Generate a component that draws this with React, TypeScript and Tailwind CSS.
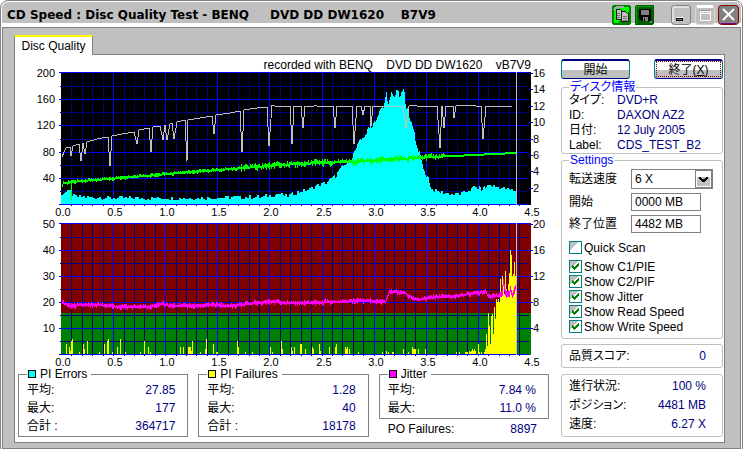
import type { ReactNode } from "react";

type Point = [number, number];

const PLOT_LEFT = 46;
const PLOT_WIDTH = 470;
const STEP = 52.1;

const writeSpeed: Point[] = [
  [1, 85], [3, 80], [5, 76], [9, 75], [10, 84], [12, 74], [18, 72], [20, 89], [22, 71], [24, 82], [26, 70],
  [36, 67], [47, 65], [49, 94], [51, 64], [61, 62], [73, 60], [76, 72], [78, 58], [88, 56], [90, 80], [92, 55],
  [99, 54], [102, 68], [104, 53], [106, 68], [109, 52], [111, 51], [113, 67], [116, 50], [124, 48], [126, 89],
  [127, 48], [139, 46], [151, 44], [153, 62], [155, 43], [169, 41], [179, 39], [181, 80], [183, 38], [196, 36],
  [206, 35], [208, 74], [211, 33], [214, 34], [229, 34], [231, 72], [233, 34], [240, 34], [242, 56], [244, 34],
  [253, 34], [254, 33], [256, 34], [272, 34], [274, 56], [276, 34], [291, 34], [293, 72], [296, 34], [300, 34],
  [302, 43], [304, 34], [309, 34], [310, 54], [312, 34], [342, 34], [345, 56], [348, 34], [354, 33], [356, 34],
  [376, 34], [379, 76], [381, 34], [383, 56], [385, 34], [392, 34], [393, 46], [395, 34], [413, 33], [415, 34],
  [420, 34], [422, 67], [425, 34], [451, 34],
];

const readSpeed: Point[] = [
  [1, 113], [2, 110], [20, 108], [60, 105], [118, 100], [170, 96], [218, 92], [260, 90], [311, 88], [371, 84], [454, 80],
];

const piErrors: Point[] = [
  [0, 10], [5, 12], [9, 13], [12, 8], [20, 7], [60, 6], [130, 6], [200, 7], [211, 9], [218, 10], [226, 8],
  [237, 12], [249, 15], [254, 18], [264, 21], [272, 26], [280, 35], [287, 42], [292, 50], [298, 61], [304, 70],
  [308, 76], [314, 84], [318, 91], [322, 96], [325, 110], [328, 102], [330, 108], [333, 104], [335, 114], [338, 110],
  [341, 114], [343, 107], [346, 91], [350, 81], [354, 66], [358, 51], [362, 35], [367, 26], [370, 15], [375, 13],
  [390, 10], [400, 10], [408, 14], [413, 17], [420, 15], [428, 19], [440, 16], [450, 14], [455, 13],
];

const jitter: Point[] = [
  [1, 79], [4, 80], [10, 82], [20, 81], [36, 81], [60, 83], [88, 83], [100, 80], [109, 82], [139, 82], [150, 81],
  [172, 82], [195, 79], [208, 78], [229, 79], [250, 79], [300, 77], [324, 78], [328, 68], [344, 69], [348, 73],
  [357, 76], [374, 73], [391, 73], [407, 70], [424, 68], [428, 73], [440, 71], [442, 61], [445, 73], [449, 67],
  [451, 71], [454, 64],
];

const piFailures: Point[] = [
  [5, 10], [8, 7], [9, 3], [10, 13], [11, 15], [18, 2], [22, 10], [23, 5], [26, 13], [38, 2], [43, 10], [46, 13],
  [47, 15], [51, 2], [56, 7], [59, 15], [64, 2], [79, 2], [83, 13], [87, 7], [89, 2], [119, 7], [122, 7], [127, 7],
  [128, 7], [129, 7], [130, 3], [131, 13], [139, 2], [144, 5], [145, 15], [152, 10], [155, 2], [156, 2], [176, 13],
  [177, 7], [184, 2], [191, 2], [209, 7], [211, 2], [220, 13], [221, 5], [230, 7], [231, 3], [233, 7], [239, 10],
  [240, 10], [244, 5], [251, 7], [252, 5], [258, 10], [259, 3], [268, 7], [274, 7], [275, 10], [284, 7], [285, 5],
  [286, 7], [288, 5], [297, 2], [321, 2], [325, 3], [327, 2], [331, 2], [332, 2], [342, 5], [347, 2], [351, 7],
  [352, 5], [353, 5], [354, 5], [357, 5], [364, 5], [395, 2], [398, 2], [404, 2], [405, 2], [406, 2], [408, 3],
  [409, 2], [410, 3], [411, 5], [412, 3], [413, 5], [414, 3], [417, 10], [418, 2], [420, 2], [423, 2], [424, 5],
  [425, 20], [426, 8], [427, 41], [428, 28], [429, 10], [430, 38], [431, 40], [432, 20], [433, 47], [434, 35],
  [435, 55], [436, 52], [437, 55], [438, 52], [439, 75], [440, 58], [441, 78], [442, 75], [443, 60], [444, 83],
  [445, 65], [446, 60], [447, 70], [448, 81], [449, 104], [450, 99], [451, 78], [452, 80], [453, 92], [454, 78],
];

function noise(i: number) {
  const n = Math.sin(i * 12.9898) * 43758.5453;
  return (n - Math.floor(n)) * 2 - 1;
}

function valueAt(points: Point[], x: number) {
  const next = points.findIndex((p) => p[0] >= x);
  if (next <= 0) return points[next === 0 ? 0 : points.length - 1][1];
  const [x0, y0] = points[next - 1];
  const [x1, y1] = points[next];
  return y0 + ((x - x0) / (x1 - x0)) * (y1 - y0);
}

function linePath(points: Point[]) {
  return "M" + points.map(([x, y]) => `${x} ${y}`).join("L");
}

// one vertical stroke per pixel column, always crossing the middle so the trace has no holes
function noisyTrace(points: Point[], end: number, amount: (x: number) => number) {
  let path = "";
  for (let x = 1; x <= end; x++) {
    const size = amount(x);
    const middle = Math.round(valueAt(points, x));
    const top = middle - Math.round(Math.abs(noise(x)) * size);
    const bottom = middle + 2 + Math.round(Math.max(0, noise(x + 500)) * size);
    path += `M${x} ${top}h1V${bottom}h-1z`;
  }
  return path;
}

function barPath(bars: Point[], base: number) {
  return bars.map(([x, h]) => `M${x} ${base}v${-h}h1v${h}z`).join("");
}

const errorBars: Point[] = Array.from({ length: 455 }, (_, x) => {
  const height = valueAt(piErrors, x);
  const spread = height > 90 ? 5 : height > 24 ? 3 : 2;
  return [x, Math.round(height + noise(Math.floor(x / 2) + 7) * spread)];
});

const readPath = noisyTrace(readSpeed, 454, (x) => (x < 180 ? 1 : x < 371 ? 3 : x < 384 ? 2 : 0));
const jitterPath = noisyTrace(jitter, 454, (x) => (x > 438 ? 5 : 2));

type ChartProps = {
  label: string;
  height: number;
  svgHeight: number;
  left: string[];
  right: string[];
  rightStep: number;
  background: ReactNode;
  children: ReactNode;
};

function Chart({ label, height, svgHeight, left, right, rightStep, background, children }: ChartProps) {
  const rows = Array.from({ length: 11 }, (_, i) => i);
  const cols = Array.from({ length: 46 }, (_, i) => i);
  const rowStep = (height - 2) / 10;

  return (
    <svg viewBox={`0 0 546 ${svgHeight}`} role="img" aria-label={label} className="block w-full overflow-visible text-[11px]">
      <g transform={`translate(${PLOT_LEFT} 0)`} shapeRendering="crispEdges">
        {background}
        {rows.filter((i) => i % 2 === 1).map((i) => (
          <path key={i} d={`M-1 ${Math.round(i * rowStep) + 1.5}H468`} stroke="#000080" />
        ))}
        {cols.filter((i) => i % 5 !== 0).map((i) => (
          <path key={i} d={`M${Math.round((i * STEP) / 5) + 0.5} 1V${height + 1}`} stroke="#000080" />
        ))}
        {rows.filter((i) => i % 2 === 0).map((i) => (
          <path key={i} d={`M-2 ${Math.round(i * rowStep) + (i === 0 ? 0.5 : 1.5)}H468`} stroke="#0000ff" />
        ))}
        {cols.filter((i) => i % 5 === 0 && i > 0 && i < 45).map((i) => (
          <path key={i} d={`M${Math.round((i * STEP) / 5) + 0.5} 1V${height + 1}`} stroke="#0000ff" />
        ))}
        {right.map((_, i) => (
          <path key={i} d={`M468 ${Math.round(i * rightStep) + 1.5}h4`} stroke="#0000ff" />
        ))}
        {children}
      </g>
      {left.map((text, i) => (
        <text key={text} x={40} y={Math.round(i * rowStep * 2) + 5} textAnchor="end">{text}</text>
      ))}
      {right.map((text, i) => (
        <text key={text} x={PLOT_LEFT + PLOT_WIDTH + 2} y={Math.round(i * rightStep) + 5}>{text}</text>
      ))}
      {Array.from({ length: 10 }, (_, i) => (
        <text key={i} x={Math.round(PLOT_LEFT + 2 + i * STEP)} y={height + 11} textAnchor="middle">{(i / 2).toFixed(1)}</text>
      ))}
    </svg>
  );
}

function StatRow({ label, value }: { label: string; value: string }) {
  return (
    <div className="flex justify-between">
      <dt>{label}</dt>
      <dd className="text-[#000080]">{value}</dd>
    </div>
  );
}

function StatBox({ title, swatch, rows }: { title: string; swatch: string; rows: [string, string][] }) {
  return (
    <fieldset className="min-w-0 border border-[#808080] pr-3 pb-px pl-2">
      <legend className="flex h-3.5 items-center gap-1 pr-1 pl-px leading-[14px]">
        <span className={`size-2 border border-black ${swatch}`} />
        {title}
      </legend>
      <dl className="leading-[18px]">
        {rows.map(([label, value]) => <StatRow key={label} label={label} value={value} />)}
      </dl>
    </fieldset>
  );
}

function Check({ label, checked = false }: { label: string; checked?: boolean }) {
  return (
    <label className="flex h-[15px] items-center gap-0.5">
      <span className="grid size-[13px] shrink-0">
        <input
          type="checkbox"
          defaultChecked={checked}
          className="peer col-start-1 row-start-1 size-[13px] appearance-none border border-[#008080] bg-white bg-linear-135 from-[#c0c0c0] from-38% to-white to-38%"
        />
        <svg viewBox="0 0 13 13" shapeRendering="crispEdges" className="pointer-events-none col-start-1 row-start-1 hidden size-[13px] peer-checked:block" aria-hidden="true">
          <path d="M3 5h1v1h1v1h1v-1h1v-1h1v-1h1v-1h1v3h-1v1h-1v1h-1v1h-1v1h-1v-1h-1v-1h-1z" fill="#008000" />
        </svg>
      </span>
      {label}
    </label>
  );
}

function TitleBar() {
  return (
    <header className="flex h-[25px] items-start justify-between rounded-t-md border-b-4 border-white bg-[#c0c0c0] pr-0.5 pl-[5px]">
      <h1 className="mt-[5px] text-[12px] leading-4 font-bold whitespace-pre [font-family:'DejaVu_Sans','Noto_Sans_CJK_JP',sans-serif]">
        {"CD Speed : Disc Quality Test - BENQ     DVD DD DW1620    B7V9"}
      </h1>
      <div className="mt-[3px] flex">
        <button type="button" aria-label="Copy" className="mr-1">
          <svg viewBox="0 0 19 20" className="h-5 w-[19px]" shapeRendering="crispEdges">
            <rect width="19" height="20" rx="3" fill="#008000" />
            <path d="M2 2h15v4l-11 12H2z" fill="#00ff00" />
            <path d="M1 4l3-3h8v2H6L2 6z" fill="#a8a8a8" />
            <path d="M4.500 4.500h4l2 2v8h-6z" fill="#c0c0c0" stroke="#202020" />
            <path d="M9.500 6.500h4l3 3v7h-7z" fill="#c0c0c0" stroke="#202020" />
            <path d="M5 8h3M5 10h3M5 12h3M11 11h4M11 13h4M11 15h4" stroke="#707070" />
          </svg>
        </button>
        <button type="button" aria-label="Save" className="mr-[17px]">
          <svg viewBox="0 0 19 20" className="h-5 w-[19px]" shapeRendering="crispEdges">
            <rect width="19" height="20" rx="2" fill="#006000" />
            <path d="M1 19V1h17" fill="none" stroke="#00a000" />
            <path d="M4 4h12v12H6l-2-2z" fill="#000" />
            <path d="M6 5h8v5H6zM8 12h5v4H8z" fill="#808080" />
            <path d="M14 5h1v1h-1zM9 13h1v3H9z" fill="#000" />
            <path d="M15 16h2v2h-2z" fill="#808080" />
          </svg>
        </button>
        <button type="button" aria-label="Minimize" className="mr-1">
          <svg viewBox="0 0 20 20" className="size-5">
            <rect x=".5" y=".5" width="19" height="19" rx="3" fill="#c0c0c0" stroke="#808080" />
            <path d="M2 17V2h16" fill="none" stroke="#fff" />
            <path d="M5 12h7v4H5z" fill="#fff" />
            <path d="M5 13h7v3H5z" fill="#000" />
            <path d="M6 14h5v1H6z" fill="#808080" />
          </svg>
        </button>
        <button type="button" aria-label="Maximize" className="mr-[3px]">
          <svg viewBox="0 0 20 20" className="size-5">
            <rect x=".5" y=".5" width="19" height="19" rx="3" fill="#c0c0c0" stroke="#d8d8d8" />
            <path d="M2 1.500h16" stroke="#fff" strokeWidth="3" />
            <path d="M5.500 6.500h10v9h-10zM5 8.500h10" fill="none" stroke="#fff" />
            <path d="M4 5h11v1H4z" fill="#909090" />
          </svg>
        </button>
        <button type="button" aria-label="Close">
          <svg viewBox="0 0 21 20" className="h-5 w-[21px]">
            <rect x=".5" y=".5" width="20" height="19" rx="3" fill="#808080" stroke="#800000" />
            <path d="M3 18.500h15" stroke="#800080" />
            <path d="M5 4l11 11M16 4L5 15" stroke="#fff" strokeWidth="2" />
          </svg>
        </button>
      </div>
    </header>
  );
}

const buttonClass = "h-5 w-[69px] rounded-[3px] border border-t-2 border-x-[#008080] border-y-[#000080] bg-linear-to-b from-white from-50% to-[#c0c0c0] to-50% text-[12px] leading-4";
const groupClass = "rounded-[3px] border border-[#c0c0c0] px-[7px]";
const fieldClass = "h-[18px] w-[70px] border border-[#808080] bg-white pl-[3px] text-[12px] leading-4";

function Sidebar() {
  return (
    <aside className="flex flex-col pt-1">
      <div className="flex justify-between">
        <button type="button" className={buttonClass}>開始</button>
        <button type="button" className={`outline-1 -outline-offset-3 outline-dotted outline-[#800000] ${buttonClass}`}>
          終了(<u>X</u>)
        </button>
      </div>

      <fieldset className={`mt-0.5 ${groupClass}`}>
        <legend className="h-3 px-px leading-3 text-[#0000ff]">ディスク情報</legend>
        <dl className="grid grid-cols-[48px_1fr] leading-[15px]">
          <dt>タイプ:</dt>
          <dd className="text-[#000080]">DVD+R</dd>
          <dt>ID:</dt>
          <dd className="text-[#000080]">DAXON AZ2</dd>
          <dt>日付:</dt>
          <dd className="text-[#000080]">12 July 2005</dd>
          <dt>Label:</dt>
          <dd className="text-[#000080]">CDS_TEST_B2</dd>
        </dl>
      </fieldset>

      <fieldset className={`pt-[3px] pb-1 ${groupClass}`}>
        <legend className="h-3 px-px leading-3 text-[#0000ff]">Settings</legend>
        <div className="grid grid-cols-[62px_1fr] items-center gap-y-1">
          <label htmlFor="speed">転送速度</label>
          <div className="grid h-5 w-[82px]">
            <select id="speed" className="col-start-1 row-start-1 appearance-none border border-[#808080] bg-white pl-[3px] text-[12px]">
              <option>6 X</option>
            </select>
            <svg viewBox="0 0 17 18" className="pointer-events-none col-start-1 row-start-1 mt-px mr-px h-[18px] w-[17px] justify-self-end" shapeRendering="crispEdges" aria-hidden="true">
              <rect x=".5" y=".5" width="16" height="17" fill="#fff" stroke="#808080" />
              <path d="M2 7h13v9H2z" fill="#c0c0c0" />
              <path d="M4 7h2v1h1v1h3V8h1V7h2v2h-1v1h-1v1h-1v1H7v-1H6v-1H5V9H4z" fill="#000" />
            </svg>
          </div>
          <label htmlFor="start">開始</label>
          <input id="start" defaultValue="0000 MB" className={fieldClass} />
          <label htmlFor="end">終了位置</label>
          <input id="end" defaultValue="4482 MB" className={fieldClass} />
        </div>
        <div className="mt-[7px] mb-1">
          <Check label="Quick Scan" />
        </div>
        <Check label="Show C1/PIE" checked />
        <Check label="Show C2/PIF" checked />
        <Check label="Show Jitter" checked />
        <Check label="Show Read Speed" checked />
        <Check label="Show Write Speed" checked />
      </fieldset>

      <dl className={`mt-[5px] py-px pr-4 leading-5 ${groupClass}`}>
        <StatRow label="品質スコア:" value="0" />
      </dl>
      <dl className={`mt-1.5 py-0.5 pr-4 leading-[19px] ${groupClass}`}>
        <StatRow label="進行状況:" value="100 %" />
        <StatRow label="ポジション:" value="4481 MB" />
        <StatRow label="速度:" value="6.27 X" />
      </dl>
    </aside>
  );
}

export default function App() {
  return (
    <div className="min-h-screen rounded-t-lg border border-[#808080] bg-white p-px text-[12px] text-black [font-family:'Liberation_Sans','Noto_Sans_CJK_JP',sans-serif] [font-feature-settings:'palt']">
      <TitleBar />
      <main className="border border-[#808080] bg-[#c0c0c0] pt-[7px] pr-[15px] pb-[5px] pl-[11px]">
        <button type="button" role="tab" aria-selected="true" className="relative -mb-px block h-5 w-[79px] border-x border-t-2 border-x-[#808080] border-t-[#ffff00] bg-white leading-4">
          Disc Quality
        </button>
        <div className="grid grid-cols-[minmax(0,1fr)_162px] border border-[#808080] bg-white pr-px pb-[3px]">
          <section>
            <p className="h-[17px] pr-[30px] text-right leading-5 whitespace-pre">{"recorded with BENQ    DVD DD DW1620    vB7V9"}</p>
            <Chart
              label="PI Errors"
              height={133}
              svgHeight={151}
              left={["200", "160", "120", "80", "40"]}
              right={["16", "14", "12", "10", "8", "6", "4", "2"]}
              rightStep={16.4}
              background={<rect width={PLOT_WIDTH} height={133} fill="#000" />}
            >
              <path d={barPath(errorBars, 132)} fill="#00ffff" />
              <path d={linePath(writeSpeed)} fill="none" stroke="#c0c0c0" />
              <path d={readPath} fill="#00ff00" />
              <path d="M10.500 110V128" stroke="#00ff00" />
              <path d="M455.500 0V133" stroke="#c0c0c0" />
            </Chart>
            <Chart
              label="PI Failures"
              height={132}
              svgHeight={144}
              left={["50", "40", "30", "20", "10"]}
              right={["20", "16", "12", "8", "4"]}
              rightStep={26}
              background={
                <>
                  <rect width={PLOT_WIDTH} height={90} fill="#800000" />
                  <rect y={90} width={PLOT_WIDTH} height={42} fill="#008000" />
                </>
              }
            >
              <path d={barPath(piFailures, 131)} fill="#ffff00" />
              <path d={jitterPath} fill="#ff00ff" />
              <path d="M455.500 0V132" stroke="#c0c0c0" />
            </Chart>
            <div className="grid grid-cols-3 items-start gap-2.5 pr-3 pl-[3px]">
              <StatBox title="PI Errors" swatch="bg-[#00ffff]" rows={[["平均:", "27.85"], ["最大:", "177"], ["合計 :", "364717"]]} />
              <StatBox title="PI Failures" swatch="bg-[#ffff00]" rows={[["平均:", "1.28"], ["最大:", "40"], ["合計 :", "18178"]]} />
              <div>
                <StatBox title="Jitter" swatch="bg-[#ff00ff]" rows={[["平均:", "7.84 %"], ["最大:", "11.0 %"]]} />
                <dl className="pr-3 pl-[9px] leading-5">
                  <StatRow label="PO Failures:" value="8897" />
                </dl>
              </div>
            </div>
          </section>
          <Sidebar />
        </div>
      </main>
    </div>
  );
}
